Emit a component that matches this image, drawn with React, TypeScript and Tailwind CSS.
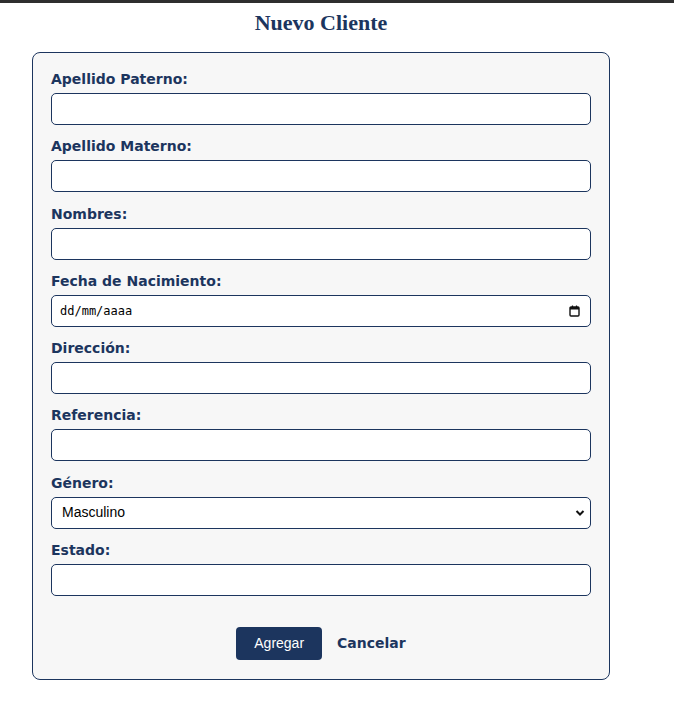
import { useState } from 'react'

const fields = [
  { label: 'Apellido Paterno:', type: 'text' },
  { label: 'Apellido Materno:', type: 'text' },
  { label: 'Nombres:', type: 'text' },
  { label: 'Fecha de Nacimiento:', type: 'date' },
  { label: 'Dirección:', type: 'text' },
  { label: 'Referencia:', type: 'text' },
  { label: 'Género:', type: 'select' },
  { label: 'Estado:', type: 'text' },
]

const boxCls =
  'block w-full h-[32px] rounded-[5px] border border-[#1c355e] bg-white text-black outline-none'

export default function App() {
  const [genero, setGenero] = useState('Masculino')

  return (
    <div className="min-h-[715px] bg-white font-['Liberation_Sans',Arial,sans-serif]">
      {/* top bar */}
      <div className="h-[3px] bg-[#2e2e2e]" />

      <div className="w-[610px] pl-[32px]">
        <h2 className="pt-[7px] pb-[16px] text-center font-['Liberation_Serif','Times_New_Roman',serif] text-[22px] font-bold leading-[26px] text-[#1c355e]">
          Nuevo Cliente
        </h2>

        {/* Form card */}
        <form className="rounded-[8px] border border-[#1c355e] bg-[#f7f7f7] px-[18px] pt-[18px] pb-[19px]">
          {fields.map((f) => (
            <div key={f.label} className="mb-[13.3px]">
              <label className="mb-[6px] block font-['DejaVu_Sans',Verdana,sans-serif] text-[14px] font-bold leading-[16px] text-[#1c355e]">
                {f.label}
              </label>
              {f.type === 'select' ? (
                <div className="relative">
                  <select
                    value={genero}
                    onChange={(e) => setGenero(e.target.value)}
                    className={boxCls + ' appearance-none px-[10px] text-[14px]'}
                  >
                    <option>Masculino</option>
                    <option>Femenino</option>
                  </select>
                  <svg
                    className="pointer-events-none absolute right-[6px] top-[12px] h-[8px] w-[10px]"
                    viewBox="0 0 10 8"
                    fill="none"
                    stroke="#111"
                    strokeWidth={2}
                  >
                    <path d="M1.5 2l3.5 3.5L8.5 2" />
                  </svg>
                </div>
              ) : f.type === 'date' ? (
                <div className="relative">
                  <input
                    type="text"
                    placeholder="dd/mm/aaaa"
                    className={boxCls + " px-[8px] font-['DejaVu_Sans_Mono',monospace] text-[12px] placeholder:text-black"}
                  />
                  <svg
                    className="pointer-events-none absolute right-[11px] top-[10px] h-[12px] w-[11px]"
                    viewBox="0 0 11 12"
                    fill="none"
                  >
                    <rect x="1" y="2" width="9" height="9" rx="1" stroke="#111" strokeWidth={1.4} />
                    <rect x="1" y="2" width="9" height="2.5" fill="#111" />
                    <path d="M3.5 0.5v2M7.5 0.5v2" stroke="#111" strokeWidth={1.2} />
                  </svg>
                </div>
              ) : (
                <input type="text" className={boxCls + ' px-[10px] text-[14px]'} />
              )}
            </div>
          ))}

          <div className="mt-[31px] flex items-center justify-center gap-[15px]">
            <button
              type="button"
              className="h-[33px] rounded-[4px] bg-[#1c355e] px-[18px] text-[14px] text-white"
            >
              Agregar
            </button>
            <button
              type="button"
              className="font-['DejaVu_Sans',Verdana,sans-serif] text-[14px] font-bold text-[#1c355e]"
            >
              Cancelar
            </button>
          </div>
        </form>
      </div>
    </div>
  )
}
